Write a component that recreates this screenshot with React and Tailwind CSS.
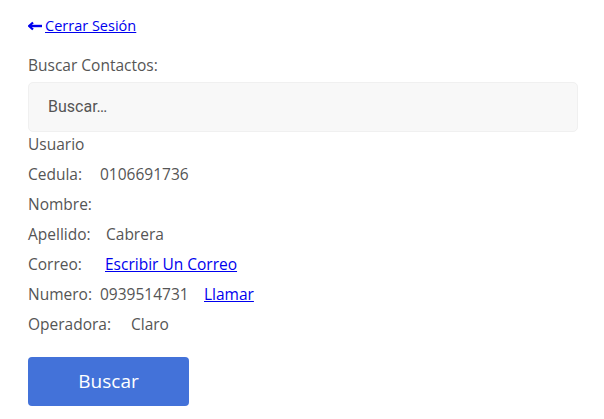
export default function App() {
  return (
    <div className="min-h-[419px] bg-white pl-[28px] pr-[26px] pt-[16px] text-[15.5px] text-[#555] font-['Open_Sans',sans-serif]">
      <div className="flex h-[20px] items-center">
        <a href="#" className="text-[14.5px] text-[#0000ee] underline leading-[20px] flex items-center">
          <svg width="14" height="10" viewBox="0 0 14 10" className="shrink-0">
            <path d="M14 5H2" stroke="#0000ee" strokeWidth="2.4" />
            <path d="M5 1.5L1.2 5L5 8.5" stroke="#0000ee" strokeWidth="2.2" fill="none" />
          </svg>
          <span className="underline pl-[3px]">Cerrar Sesión</span>
        </a>
      </div>
      <div className="mt-[18px] leading-[22px]">Buscar Contactos:</div>
      <div className="mt-[6px] h-[50px] rounded-[5px] border border-[#f0f0f0] bg-[#f8f8f8] flex items-center px-[19px] text-[16px] text-[#555] font-['Roboto',sans-serif]">Buscar…</div>
      <div className="flex flex-col gap-[6px] leading-[24px]">
        <div>Usuario</div>
        <div className="flex"><span className="w-[72px]">Cedula:</span><span>0106691736</span></div>
        <div>Nombre:</div>
        <div className="flex"><span className="w-[78px]">Apellido:</span><span>Cabrera</span></div>
        <div className="flex"><span className="w-[77px]">Correo:</span><a href="#" className="text-[#0000ee] underline">Escribir Un Correo</a></div>
        <div className="flex"><span className="w-[72px]">Numero:</span><span className="w-[104px]">0939514731</span><a href="#" className="text-[#0000ee] underline">Llamar</a></div>
        <div className="flex"><span className="w-[103px]">Operadora:</span><span>Claro</span></div>
      </div>
      <button className="mt-[21px] w-[161px] h-[49px] rounded-[4px] bg-[#4372d9] text-white text-[19px]">Buscar</button>
    </div>
  );
}
